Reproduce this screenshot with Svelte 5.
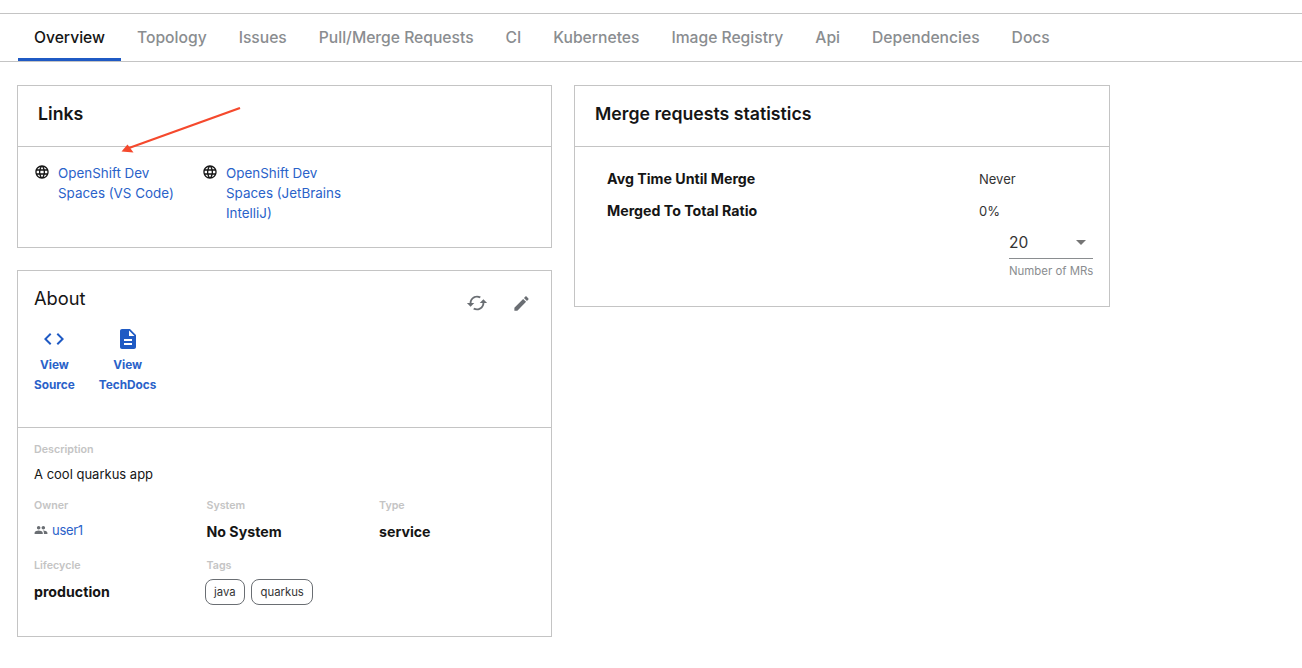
<script>
  const tabs = ['Overview', 'Topology', 'Issues', 'Pull/Merge Requests', 'CI', 'Kubernetes', 'Image Registry', 'Api', 'Dependencies', 'Docs'];
  const globe = 'M11.99 2C6.47 2 2 6.48 2 12s4.47 10 9.99 10C17.52 22 22 17.52 22 12S17.52 2 11.99 2zm6.93 6h-2.95c-.32-1.25-.78-2.45-1.38-3.56 1.84.63 3.37 1.91 4.33 3.56zM12 4.04c.83 1.2 1.48 2.53 1.91 3.96h-3.82c.43-1.43 1.08-2.76 1.91-3.96zM4.26 14C4.1 13.36 4 12.69 4 12s.1-1.36.26-2h3.38c-.08.66-.14 1.32-.14 2 0 .68.06 1.34.14 2H4.26zm.82 2h2.95c.32 1.25.78 2.45 1.38 3.56-1.84-.63-3.37-1.9-4.33-3.56zm2.95-8H5.08c.96-1.66 2.49-2.93 4.33-3.56C8.81 5.55 8.35 6.75 8.03 8zM12 19.96c-.83-1.2-1.48-2.53-1.91-3.96h3.82c-.43 1.43-1.08 2.76-1.91 3.96zM14.34 14H9.66c-.09-.66-.16-1.32-.16-2 0-.68.07-1.35.16-2h4.68c.09.65.16 1.32.16 2 0 .68-.07 1.34-.16 2zm.25 5.56c.6-1.11 1.06-2.31 1.38-3.56h2.95c-.96 1.65-2.49 2.93-4.33 3.56zM16.36 14c.08-.66.14-1.32.14-2 0-.68-.06-1.34-.14-2h3.38c.16.64.26 1.31.26 2s-.1 1.36-.26 2h-3.38z';
  const links = ['OpenShift Dev Spaces (VS Code)', 'OpenShift Dev Spaces (JetBrains IntelliJ)'];
</script>

<div class="page">
  <nav class="tabs">
    {#each tabs as tab, i}
      <span class="tab" class:active={i === 0}>{tab}</span>
    {/each}
  </nav>

  <main class="content">
    <div class="column">
      <section class="card links-card">
        <h2 class="card-title">Links</h2>
        <div class="links">
          {#each links as link}
            <div class="link">
              <svg class="globe" viewBox="0 0 24 24"><path d={globe} /></svg>
              <a href="#top">{link}</a>
            </div>
          {/each}
        </div>
      </section>

      <section class="card about">
        <div class="about-top">
          <div class="about-head">
            <h2>About</h2>
            <div class="actions">
              <svg viewBox="0 0 24 24"><path d="M19 8l-4 4h3c0 3.31-2.69 6-6 6-1.01 0-1.97-.25-2.8-.7l-1.46 1.46C8.97 19.54 10.43 20 12 20c4.42 0 8-3.58 8-8h3l-4-4zM6 12c0-3.31 2.69-6 6-6 1.01 0 1.97.25 2.8.7l1.46-1.46C15.03 4.46 13.57 4 12 4c-4.42 0-8 3.58-8 8H1l4 4 4-4H6z" /></svg>
              <svg viewBox="0 0 24 24"><path d="M3 17.25V21h3.75L17.81 9.94l-3.75-3.75L3 17.25zM20.71 7.04c.39-.39.39-1.02 0-1.41l-2.34-2.34c-.39-.39-1.02-.39-1.41 0l-1.83 1.83 3.75 3.75 1.83-1.83z" /></svg>
            </div>
          </div>
          <div class="quick">
            <a href="#top" class="quick-link">
              <svg viewBox="0 0 24 24"><path d="M9.4 16.6L4.8 12l4.6-4.6L8 6l-6 6 6 6 1.4-1.4zm5.2 0l4.6-4.6-4.6-4.6L16 6l6 6-6 6-1.4-1.4z" /></svg>
              <span>View<br />Source</span>
            </a>
            <a href="#top" class="quick-link">
              <svg viewBox="0 0 24 24"><path d="M14 2H6c-1.1 0-1.99.9-1.99 2L4 20c0 1.1.89 2 1.99 2H18c1.1 0 2-.9 2-2V8l-6-6zm2 16H8v-2h8v2zm0-4H8v-2h8v2zm-3-5V3.5L18.5 9H13z" /></svg>
              <span>View<br />TechDocs</span>
            </a>
          </div>
        </div>
        <div class="about-body">
          <div class="field">
            <div class="label">Description</div>
            <div class="desc">A cool quarkus app</div>
          </div>
          <div class="fields">
            <div class="field">
              <div class="label">Owner</div>
              <div class="owner">
                <svg viewBox="0 0 24 24"><path d="M16 11c1.66 0 2.99-1.34 2.99-3S17.66 5 16 5c-1.66 0-3 1.34-3 3s1.34 3 3 3zm-8 0c1.66 0 2.99-1.34 2.99-3S9.66 5 8 5C6.34 5 5 6.34 5 8s1.34 3 3 3zm0 2c-2.33 0-7 1.17-7 3.5V19h14v-2.5c0-2.33-4.67-3.5-7-3.5zm8 0c-.29 0-.62.02-.97.05 1.16.84 1.97 1.97 1.97 3.45V19h6v-2.5c0-2.33-4.67-3.5-7-3.5z" /></svg>
                <a href="#top">user1</a>
              </div>
            </div>
            <div class="field">
              <div class="label">System</div>
              <div class="value">No System</div>
            </div>
            <div class="field">
              <div class="label">Type</div>
              <div class="value">service</div>
            </div>
            <div class="field">
              <div class="label">Lifecycle</div>
              <div class="value">production</div>
            </div>
            <div class="field">
              <div class="label">Tags</div>
              <div class="chips">
                <span class="chip">java</span>
                <span class="chip">quarkus</span>
              </div>
            </div>
          </div>
        </div>
      </section>
    </div>

    <section class="card stats">
      <h2 class="card-title">Merge requests statistics</h2>
      <div class="stats-body">
        <div class="stat"><b>Avg Time Until Merge</b><span>Never</span></div>
        <div class="stat"><b>Merged To Total Ratio</b><span>0%</span></div>
        <div class="select-wrap">
          <div class="select">
            <span>20</span>
            <i class="caret"></i>
          </div>
          <div class="helper">Number of MRs</div>
        </div>
      </div>
    </section>
  </main>

  <svg class="arrow" width="140" height="56" viewBox="0 0 140 56">
    <line x1="128" y1="1" x2="17" y2="41" stroke="#f5492d" stroke-width="2.2" />
    <polygon points="9.5,44.5 15.5,37.5 21.5,45.5" fill="#f5492d" />
  </svg>
</div>

<style>
  :global(body) {
    margin: 0;
    background: #fff;
  }
  .page {
    position: relative;
    height: 668px;
    overflow: hidden;
    padding-top: 13px;
    box-sizing: border-box;
    font-family: Inter, "Noto Sans", sans-serif;
    color: #151515;
    font-size: 13px;
  }
  a {
    color: #2a62c9;
    text-decoration: none;
  }
  h2 {
    margin: 0;
    font-size: 17.7px;
  }
  .tabs {
    display: flex;
    height: 47px;
    padding-left: 18px;
    border-top: 1px solid #c4c4c4;
    border-bottom: 1px solid #c4c4c4;
  }
  .tab {
    height: 47px;
    box-sizing: border-box;
    padding: 14px 16px 0;
    font-size: 15.65px;
    font-weight: 500;
    line-height: 20px;
    color: #8a8d90;
    white-space: nowrap;
  }
  .tab.active {
    color: #151515;
    border-bottom: 3px solid #1f5ac4;
  }
  .content {
    display: grid;
    grid-template-columns: 535px 536px;
    gap: 22px;
    align-items: start;
    padding: 23px 0 0 17px;
  }
  .column {
    display: flex;
    flex-direction: column;
    gap: 22px;
  }
  .card {
    border: 1px solid #c4c4c4;
    box-sizing: border-box;
  }
  .card-title {
    height: 60px;
    line-height: 56px;
    padding-left: 20px;
    font-weight: 600;
    border-bottom: 1px solid #c4c4c4;
  }
  .links-card {
    height: 163px;
  }
  .links {
    display: flex;
    padding: 16px 16px 0;
  }
  .link {
    display: flex;
    gap: 8px;
    width: 168px;
    line-height: 20px;
    font-size: 13.4px;
  }
  .link a {
    width: 120px;
  }
  .globe {
    width: 16px;
    height: 16px;
    flex: none;
    margin: 1px 0 0;
    fill: #151515;
  }
  .about {
    height: 367px;
  }
  .about-top {
    height: 157px;
    box-sizing: border-box;
    padding: 16px 16px 0;
    border-bottom: 1px solid #c4c4c4;
  }
  .about-head {
    display: flex;
    justify-content: space-between;
  }
  .about-head h2 {
    font-size: 18.3px;
    font-weight: 400;
    line-height: 23px;
  }
  .actions {
    display: flex;
    align-items: center;
    gap: 24px;
    margin: 5px 4px 0 0;
    height: 22px;
  }
  .actions svg {
    width: 22px;
    height: 22px;
    fill: #6a6e73;
  }
  .actions svg:last-child {
    width: 19px;
    height: 19px;
  }
  .quick {
    display: flex;
    gap: 24px;
    margin-top: 13px;
  }
  .quick-link {
    display: flex;
    flex-direction: column;
    align-items: center;
    text-align: center;
    font-size: 11.8px;
    font-weight: 700;
    line-height: 20px;
  }
  .quick-link svg {
    width: 24px;
    height: 24px;
    fill: #1f5ac4;
    margin-bottom: 4px;
  }
  .about-body {
    padding: 15px 16px 0;
  }
  .label {
    font-size: 10.7px;
    font-weight: 600;
    line-height: 13px;
    color: #c4c4c4;
  }
  .desc {
    margin-top: 8px;
    line-height: 20px;
  }
  .fields {
    display: grid;
    grid-template-columns: repeat(3, 172.5px);
    grid-row-gap: 17px;
    margin-top: 15px;
  }
  .value {
    margin-top: 10px;
    height: 20px;
    line-height: 20px;
    font-size: 14.2px;
    font-weight: 700;
  }
  .owner {
    display: flex;
    align-items: center;
    gap: 4px;
    margin-top: 8px;
    height: 20px;
    line-height: 20px;
    letter-spacing: -0.3px;
  }
  .owner svg {
    width: 14px;
    height: 14px;
    fill: #6a6e73;
  }
  .chips {
    display: flex;
    gap: 6px;
    margin: 7px 0 0 -2px;
  }
  .chip {
    height: 24px;
    padding: 0 8.5px;
    line-height: 24px;
    border: 1px solid #6a6e73;
    border-radius: 8px;
    font-size: 11.3px;
    color: #333;
  }
  .stats {
    height: 222px;
  }
  .stats-body {
    padding: 22px 16px 0 32px;
  }
  .stat {
    display: flex;
    height: 32px;
    line-height: 20px;
  }
  .stat b {
    width: 372px;
    font-weight: 700;
    font-size: 14.2px;
  }
  .stat span {
    font-size: 13px;
    color: #333;
  }
  .select-wrap {
    width: 84px;
    margin: -3px 0 0 auto;
  }
  .select {
    display: flex;
    justify-content: space-between;
    align-items: center;
    height: 29px;
    box-sizing: border-box;
    border-bottom: 1px solid #8a8d90;
    font-size: 15.5px;
    color: #333;
    padding: 0 7px 3px 0;
  }
  .caret {
    width: 0;
    height: 0;
    border-left: 5px solid transparent;
    border-right: 5px solid transparent;
    border-top: 5px solid #757575;
  }
  .helper {
    margin-top: 4px;
    font-size: 11.4px;
    line-height: 16px;
    color: #8a8d90;
    white-space: nowrap;
  }
  .arrow {
    position: absolute;
    left: 112px;
    top: 107px;
  }
</style>
